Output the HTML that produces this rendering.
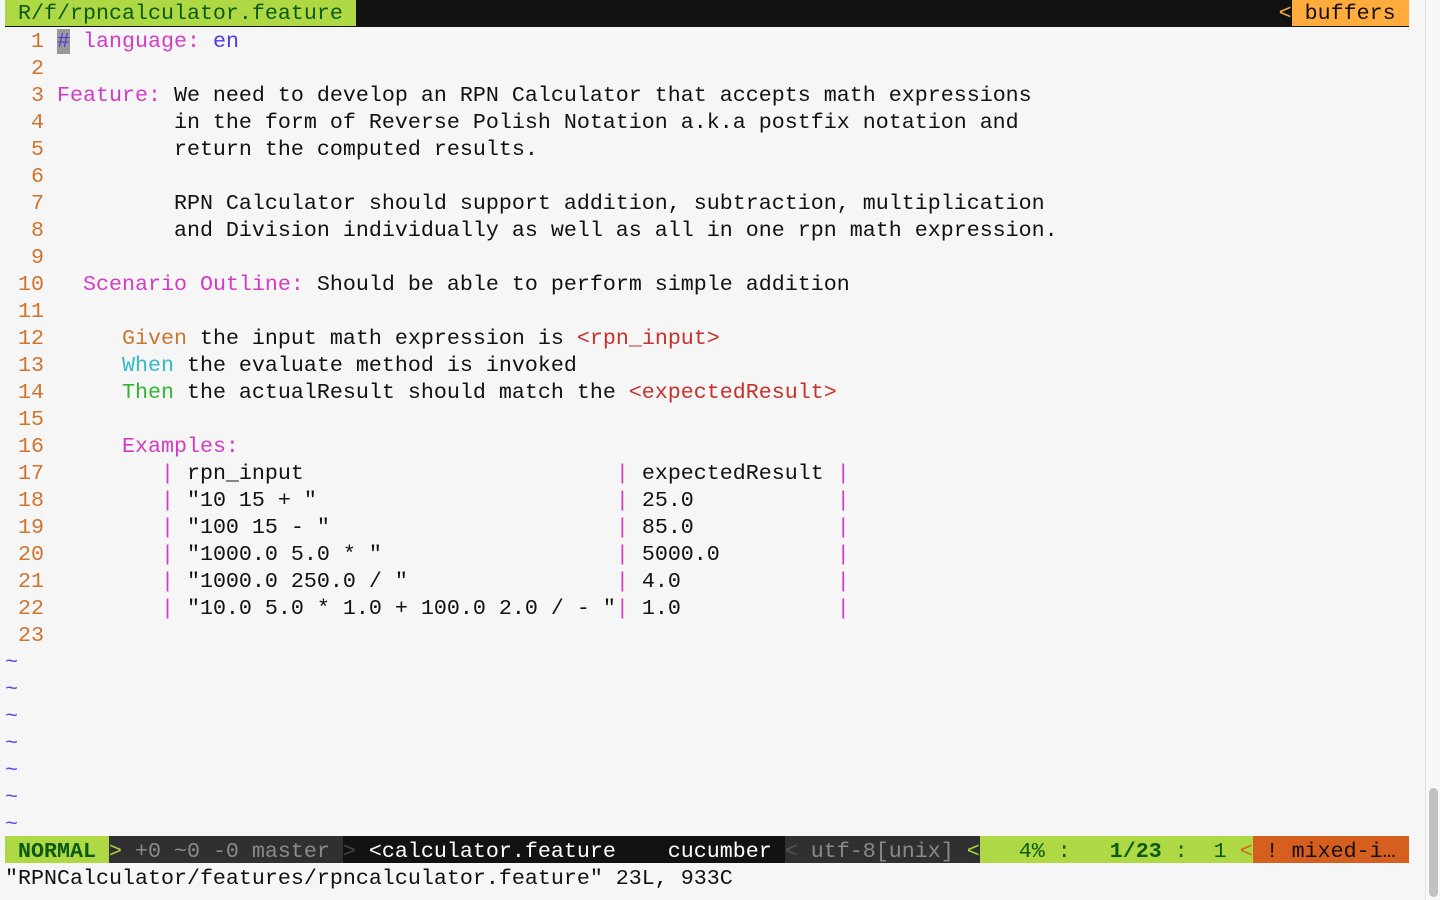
<!DOCTYPE html>
<html><head><meta charset="utf-8"><style>
html,body{margin:0;padding:0;background:#f6f6f6;width:1440px;height:900px;overflow:hidden}
pre{margin:0;position:absolute;left:5px;font-family:"Liberation Mono",monospace;font-size:21.67px;line-height:27px;color:#111;white-space:pre}
.n{color:#d0732c}.k{color:#d23cc4}.b{color:#4b3be0}.g{color:#c9772f}.w{color:#33b9c9}.t{color:#2fb534}.r{color:#c8302b}.tl{color:#5a4ce0}
.bar{position:absolute;left:5px;width:1404px;height:27px}
.sb{position:absolute;left:1425px;top:0;width:15px;height:900px;background:#f8f8f8;border-left:1px solid #e2e2e2}
.th{position:absolute;left:1429px;top:788px;width:9px;height:109px;border-radius:5px;background:#c2c2c2}
</style></head><body>
<div class="bar" style="top:0;background:#121212"></div>
<div style="position:absolute;left:5px;top:0;width:351px;height:26px;background:#afd845"></div>
<div style="position:absolute;left:1292px;top:0;width:117px;height:26px;background:#ffab3e"></div>
<pre style="top:0px"><span style="color:#0a5a12"> R/f/rpncalculator.feature </span>                                                                       <span style="color:#ffab3e">&lt;</span> buffers </pre>
<pre style="top:28px"><span class="n">  1 </span><span class="b" style="background:#999">#</span> <span class="k">language:</span> <span class="b">en</span>
<span class="n">  2 </span>
<span class="n">  3 </span><span class="k">Feature:</span> We need to develop an RPN Calculator that accepts math expressions
<span class="n">  4 </span>         in the form of Reverse Polish Notation a.k.a postfix notation and
<span class="n">  5 </span>         return the computed results.
<span class="n">  6 </span>
<span class="n">  7 </span>         RPN Calculator should support addition, subtraction, multiplication
<span class="n">  8 </span>         and Division individually as well as all in one rpn math expression.
<span class="n">  9 </span>
<span class="n"> 10 </span>  <span class="k">Scenario Outline:</span> Should be able to perform simple addition
<span class="n"> 11 </span>
<span class="n"> 12 </span>     <span class="g">Given</span> the input math expression is <span class="r">&lt;rpn_input&gt;</span>
<span class="n"> 13 </span>     <span class="w">When</span> the evaluate method is invoked
<span class="n"> 14 </span>     <span class="t">Then</span> the actualResult should match the <span class="r">&lt;expectedResult&gt;</span>
<span class="n"> 15 </span>
<span class="n"> 16 </span>     <span class="k">Examples:</span>
<span class="n"> 17 </span>        <span class="k">|</span> rpn_input                        <span class="k">|</span> expectedResult <span class="k">|</span>
<span class="n"> 18 </span>        <span class="k">|</span> "10 15 + "                       <span class="k">|</span> 25.0           <span class="k">|</span>
<span class="n"> 19 </span>        <span class="k">|</span> "100 15 - "                      <span class="k">|</span> 85.0           <span class="k">|</span>
<span class="n"> 20 </span>        <span class="k">|</span> "1000.0 5.0 * "                  <span class="k">|</span> 5000.0         <span class="k">|</span>
<span class="n"> 21 </span>        <span class="k">|</span> "1000.0 250.0 / "                <span class="k">|</span> 4.0            <span class="k">|</span>
<span class="n"> 22 </span>        <span class="k">|</span> "10.0 5.0 * 1.0 + 100.0 2.0 / - "<span class="k">|</span> 1.0            <span class="k">|</span>
<span class="n"> 23 </span>
<span class="tl">~</span>
<span class="tl">~</span>
<span class="tl">~</span>
<span class="tl">~</span>
<span class="tl">~</span>
<span class="tl">~</span>
<span class="tl">~</span></pre>
<div class="bar" style="top:836px;background:#121212"></div>
<div style="position:absolute;left:5px;top:836px;width:104px;height:27px;background:#afd845"></div>
<div style="position:absolute;left:109px;top:836px;width:234px;height:27px;background:#303030"></div>
<div style="position:absolute;left:785px;top:836px;width:195px;height:27px;background:#303030"></div>
<div style="position:absolute;left:980px;top:836px;width:273px;height:27px;background:#afd845"></div>
<div style="position:absolute;left:1253px;top:836px;width:156px;height:27px;background:#d65f1f"></div>
<pre style="top:838px"><b style="color:#0a5a12"> NORMAL </b><span style="color:#afd845">&gt;</span><span style="color:#8a8a8a"> +0 ~0 -0 master </span><span style="color:#444">&gt;</span><span style="color:#fff"> &lt;calculator.feature    cucumber </span><span style="color:#555">&lt;</span><span style="color:#8a8a8a"> utf-8[unix] </span><span style="color:#afd845">&lt;</span><span style="color:#0a5a12">   4% :   <b>1/23</b> :  1 </span><span style="color:#d65f1f">&lt;</span><span style="color:#111"> ! mixed-i…</span></pre>
<pre style="top:865px">"RPNCalculator/features/rpncalculator.feature" 23L, 933C</pre>
<div class="sb"></div><div class="th"></div>
</body></html>
